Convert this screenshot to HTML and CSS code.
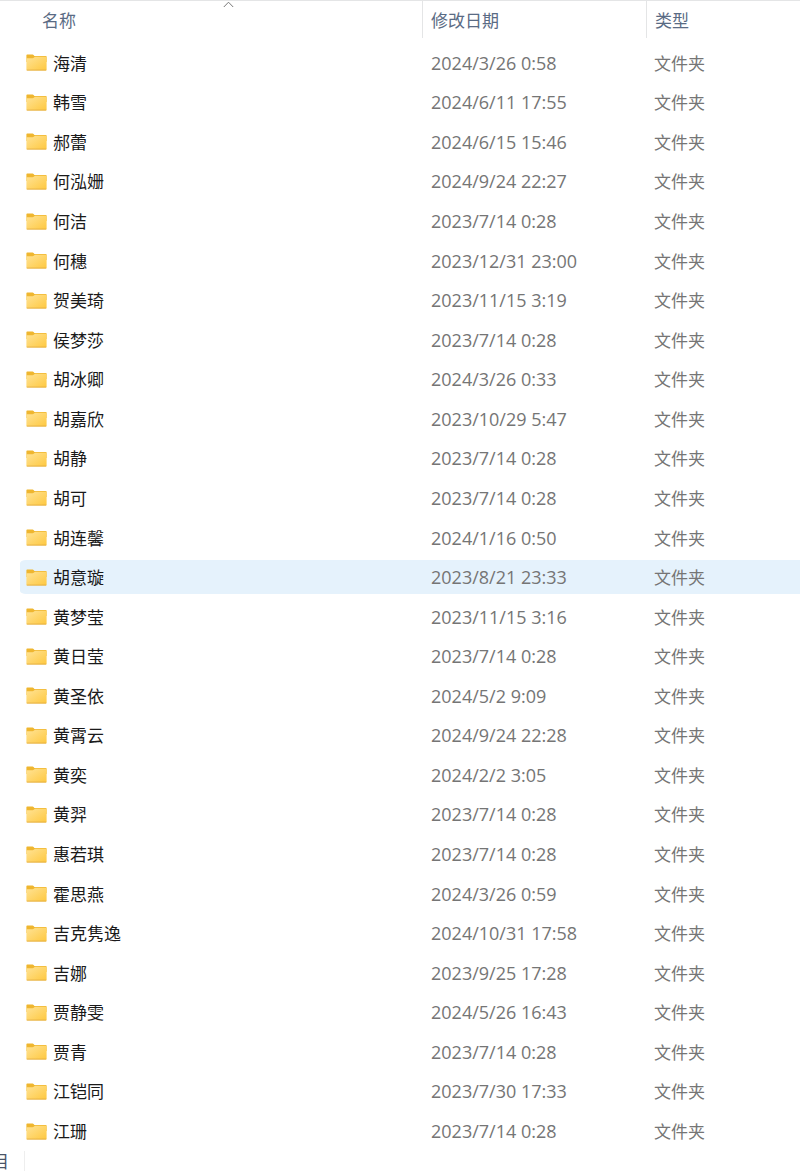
FILE: index.html
```html
<!DOCTYPE html>
<html lang="zh-CN">

<head>
    <meta charset="UTF-8">
    <meta name="viewport" content="width=device-width, initial-scale=1.0">
    <title>文件夹</title>
    <link rel="stylesheet" href="styles.css">
</head>

<body>
    <!-- shared folder icon -->
    <svg class="defs" width="0" height="0" aria-hidden="true">
        <defs>
            <linearGradient id="folderFront" x1="0" y1="0" x2="1" y2="1">
                <stop offset="0" stop-color="#ffe396" />
                <stop offset="1" stop-color="#fec83f" />
            </linearGradient>
        </defs>
        <symbol id="folder" viewBox="0 0 21 17">
            <path fill="#efb62f" d="M0.4 1.2Q0.4 0.4 1.2 0.4H6.6Q7.2 0.4 7.6 1L8.4 2.1H20Q20.6 2.1 20.6 2.7V8H0.4Z" />
            <path fill="url(#folderFront)" d="M0.4 4.2H6.6Q7.4 4.2 8 3.6L9 2.7H20.1Q20.6 2.7 20.6 3.2V15.8Q20.6 16.4 20 16.4H1Q0.4 16.4 0.4 15.8Z" />
            <path fill="none" stroke="#dfa940" stroke-width="0.8" d="M0.8 16.1H20.2" />
        </symbol>
    </svg>

    <main class="explorer">
        <table class="file-list">
            <colgroup>
                <col class="col-name">
                <col class="col-date">
                <col class="col-type">
            </colgroup>
            <thead>
                <tr>
                    <th aria-sort="ascending">
                        <button type="button" class="sort-btn sort-name">名称
                            <svg class="sort-arrow" width="11" height="7" viewBox="0 0 11 7" aria-hidden="true">
                                <path d="M0.8 6L5.5 1.2L10.2 6" />
                            </svg>
                        </button>
                    </th>
                    <th><button type="button" class="sort-btn">修改日期</button></th>
                    <th><button type="button" class="sort-btn">类型</button></th>
                </tr>
            </thead>
            <tbody id="file-rows"></tbody>
        </table>
    </main>

    <footer class="status-bar">
        <span class="status-text">目</span>
        <span class="status-divider"></span>
    </footer>

    <script src="script.js"></script>
</body>

</html>
```
FILE: styles.css
```css
* {
    box-sizing: border-box;
}

body {
    margin: 0;
    min-height: 100vh;
    display: flex;
    flex-direction: column;
    overflow-x: hidden;
    background-color: #fff;
    color: #1a1a1a;
    font-family: "Noto Sans CJK SC", sans-serif;
    font-size: 17px;
    line-height: 24px;
}

.defs {
    position: absolute;
}

.explorer {
    flex: 1;
    display: flex;
    padding-left: 20px;
    border-top: 1px solid #e4e5e6;
}

.file-list {
    width: 100%;
    table-layout: fixed;
    border-collapse: separate;
    border-spacing: 0;
}

.col-name {
    width: 402px;
}

.col-date {
    width: 224px;
}

th {
    height: 42px;
    padding: 0;
    font-weight: normal;
    vertical-align: top;
}

.sort-btn {
    position: relative;
    display: block;
    width: 100%;
    height: 37px;
    padding: 0 8px;
    border: none;
    border-left: 1px solid #e4e5e6;
    background: none;
    color: #5a6b84;
    font: inherit;
    text-align: left;
}

.sort-name {
    padding-left: 22px;
    border-left: none;
}

.sort-arrow {
    position: absolute;
    top: 0;
    left: 50%;
    margin-left: 2px;
    fill: none;
    stroke: #777;
    stroke-width: 1;
}

td {
    padding: 0 8px;
    border: solid transparent;
    border-width: 3px 0;
    background-clip: padding-box;
    color: #757575;
    white-space: nowrap;
}

.cell-name {
    padding-left: 6px;
    border-radius: 6px 0 0 6px;
}

.cell-date {
    padding-left: 9px;
    font-family: "Open Sans", "Noto Sans", sans-serif;
    font-size: 18px;
}

.selected td {
    background-color: #e5f2fc;
}

.file-link {
    display: flex;
    align-items: center;
    gap: 6px;
    color: #1a1a1a;
    text-decoration: none;
}

.status-bar {
    display: flex;
    align-items: center;
    height: 20px;
    gap: 15px;
    color: #4a5468;
}

.status-text {
    margin-left: -8px;
}

.status-divider {
    width: 1px;
    height: 100%;
    background-color: #eee;
}
```
FILE: script.js
```js
const folders = [
    ['海清', '2024/3/26 0:58'],
    ['韩雪', '2024/6/11 17:55'],
    ['郝蕾', '2024/6/15 15:46'],
    ['何泓姗', '2024/9/24 22:27'],
    ['何洁', '2023/7/14 0:28'],
    ['何穗', '2023/12/31 23:00'],
    ['贺美琦', '2023/11/15 3:19'],
    ['侯梦莎', '2023/7/14 0:28'],
    ['胡冰卿', '2024/3/26 0:33'],
    ['胡嘉欣', '2023/10/29 5:47'],
    ['胡静', '2023/7/14 0:28'],
    ['胡可', '2023/7/14 0:28'],
    ['胡连馨', '2024/1/16 0:50'],
    ['胡意璇', '2023/8/21 23:33'],
    ['黄梦莹', '2023/11/15 3:16'],
    ['黄日莹', '2023/7/14 0:28'],
    ['黄圣依', '2024/5/2 9:09'],
    ['黄霄云', '2024/9/24 22:28'],
    ['黄奕', '2024/2/2 3:05'],
    ['黄羿', '2023/7/14 0:28'],
    ['惠若琪', '2023/7/14 0:28'],
    ['霍思燕', '2024/3/26 0:59'],
    ['吉克隽逸', '2024/10/31 17:58'],
    ['吉娜', '2023/9/25 17:28'],
    ['贾静雯', '2024/5/26 16:43'],
    ['贾青', '2023/7/14 0:28'],
    ['江铠同', '2023/7/30 17:33'],
    ['江珊', '2023/7/14 0:28']
];

const selected = '胡意璇';

document.getElementById('file-rows').innerHTML = folders.map(([name, date]) => `
    <tr class="${name === selected ? 'selected' : ''}">
        <td class="cell-name">
            <a class="file-link" href="#">
                <svg width="21" height="17" aria-hidden="true"><use href="#folder" /></svg>
                <span>${name}</span>
            </a>
        </td>
        <td class="cell-date">${date}</td>
        <td>文件夹</td>
    </tr>`).join('');
```
